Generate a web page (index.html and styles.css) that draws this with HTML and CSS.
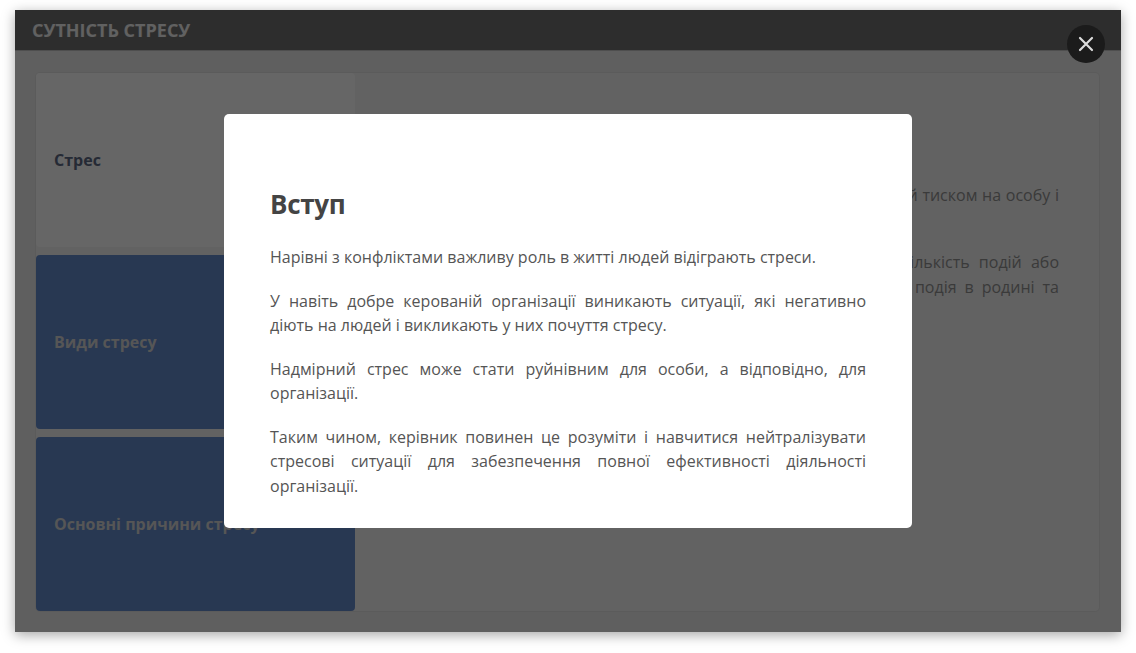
FILE: index.html
```html
<!DOCTYPE html>
<html lang="uk">
<head>
<meta charset="utf-8">
<title>Сутність стресу</title>
<link rel="stylesheet" href="styles.css">
</head>
<body>
<div class="page">
  <div class="panel">
    <div class="panel-header">Сутність стресу</div>
    <div class="panel-body">
      <div class="card">
        <div class="tabs">
          <div class="tab tab-active">Стрес</div>
          <div class="tab tab-blue">Види стресу</div>
          <div class="tab tab-blue">Основні причини стресу</div>
        </div>
        <div class="content">
          <h2 class="content-title">Стрес</h2>
          <p class="line just">Стрес — це стан напруження організму людини, який викликаний тиском на особу і</p>
          <p class="line last">на її діяльність з боку зовнішнього середовища.</p>
          <p class="line just gap">Причиною стресу може бути як окрема подія, так і велика кількість подій або</p>
          <p class="line just">обставин: конфлікт на роботі, хвороба, сварка або неприємна подія в родині та</p>
          <p class="line last">навіть радісні зміни в житті людини.</p>
        </div>
      </div>
    </div>
    <div class="overlay"></div>
    <button class="close" aria-label="Закрити">
      <svg width="16" height="16" viewBox="0 0 16 16"><path d="M2 2 L14 14 M14 2 L2 14" stroke="#dcdcdc" stroke-width="2.2" stroke-linecap="round" fill="none"/></svg>
    </button>
    <div class="modal">
      <h1 class="modal-title">Вступ</h1>
      <p class="modal-text">Нарівні з конфліктами важливу роль в житті людей відіграють стреси.</p>
      <p class="modal-text">У навіть добре керованій організації виникають ситуації, які негативно діють на людей і викликають у них почуття стресу.</p>
      <p class="modal-text">Надмірний стрес може стати руйнівним для особи, а відповідно, для організації.</p>
      <p class="modal-text">Таким чином, керівник повинен це розуміти і навчитися нейтралізувати стресові ситуації для забезпечення повної ефективності діяльності організації.</p>
    </div>
  </div>
</div>
</body>
</html>
```

FILE: styles.css
```css
* { box-sizing: border-box; }
html, body { margin: 0; padding: 0; background: #fff; }
body { font-family: "Open Sans", "Noto Sans", sans-serif; }

.page {
  width: 1136px;
  height: 653px;
  padding: 10px 15px 21px;
}

.panel {
  position: relative;
  width: 1106px;
  height: 622px;
  background: #eeeeee;
  box-shadow: 0 3px 12px rgba(0, 0, 0, 0.35);
  display: flex;
  flex-direction: column;
}

.panel-header {
  height: 41px;
  flex: none;
  background: #727272;
  border-bottom: 1px solid #c4c4c4;
  color: #f2f2f2;
  font-weight: 700;
  font-size: 18px;
  text-transform: uppercase;
  padding: 0 17px;
  line-height: 40px;
  letter-spacing: 0;
}

.panel-body {
  flex: 1;
  padding: 22px 22px 21px 21px;
  display: flex;
}

.card {
  flex: 1;
  display: flex;
  background: #f5f5f5;
  border-radius: 4px;
  box-shadow: 0 0 0 1px #e4e4e4;
}

.tabs {
  width: 319px;
  flex: none;
  display: flex;
  flex-direction: column;
  gap: 8px;
}

.tab {
  flex: 1;
  display: flex;
  align-items: center;
  padding: 0 18px;
  font-weight: 700;
  font-size: 16px;
  border-radius: 4px;
}

.tab-active { background: #ffffff; color: #5c6984; }
.tab-blue { background: #658cce; color: #d6d6d6; }

.content {
  flex: 1;
  padding: 76px 40px 0 40px;
  color: #929292;
  font-size: 16px;
  line-height: 25px;
}

.content-title {
  margin: 0 0 10px;
  font-size: 20px;
  line-height: 24px;
  font-weight: 700;
  color: #5c6984;
}

.line { margin: 0; white-space: nowrap; overflow: hidden; }
.line.just { text-align: justify; text-align-last: justify; white-space: normal; height: 25px; }
.line.gap { margin-top: 17px; }

.overlay {
  position: absolute;
  inset: 0;
  background: rgba(0, 0, 0, 0.6);
}

.close {
  position: absolute;
  top: 15px;
  right: 16px;
  width: 38px;
  height: 38px;
  border: none;
  border-radius: 50%;
  background: #1b1b1b;
  padding: 0;
  display: flex;
  align-items: center;
  justify-content: center;
}

.modal {
  position: absolute;
  left: 209px;
  top: 104px;
  width: 688px;
  height: 414px;
  background: #fff;
  border-radius: 5px;
  padding: 73px 46px 0 46px;
}

.modal-title {
  margin: 0 0 24px;
  font-size: 26px;
  line-height: 34px;
  font-weight: 700;
  color: #444;
  letter-spacing: -0.3px;
}

.modal-text {
  margin: 0 0 19px;
  font-size: 16px;
  line-height: 24.5px;
  color: #555;
  text-align: justify;
}
```
